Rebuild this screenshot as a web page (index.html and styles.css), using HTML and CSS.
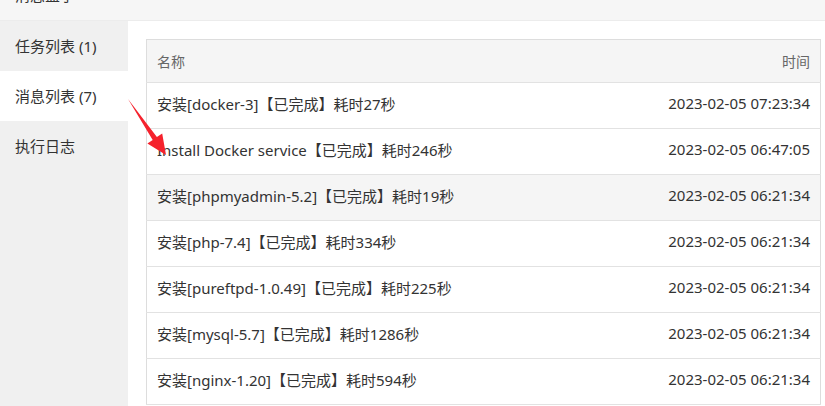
FILE: index.html
```html
<!DOCTYPE html>
<html lang="zh-CN">
<head>
    <meta charset="UTF-8">
    <title>消息盒子</title>
    <link rel="stylesheet" href="styles.css">
</head>
<body>

<div class="box">
    <div class="box-title"><span>消息盒子</span></div>
    <div class="box-body">
        <ul class="tabs">
            <li class="tab">任务列表 (1)</li>
            <li class="tab active">消息列表 (7)</li>
            <li class="tab">执行日志</li>
        </ul>
        <div class="panel">
            <table class="msg-table">
                <thead>
                    <tr>
                        <th>名称</th>
                        <th class="time">时间</th>
                    </tr>
                </thead>
                <tbody>
                    <tr><td>安装[docker-3]【已完成】耗时27秒</td><td class="time">2023-02-05 07:23:34</td></tr>
                    <tr><td>Install Docker service【已完成】耗时246秒</td><td class="time">2023-02-05 06:47:05</td></tr>
                    <tr class="hover"><td>安装[phpmyadmin-5.2]【已完成】耗时19秒</td><td class="time">2023-02-05 06:21:34</td></tr>
                    <tr><td>安装[php-7.4]【已完成】耗时334秒</td><td class="time">2023-02-05 06:21:34</td></tr>
                    <tr><td>安装[pureftpd-1.0.49]【已完成】耗时225秒</td><td class="time">2023-02-05 06:21:34</td></tr>
                    <tr><td>安装[mysql-5.7]【已完成】耗时1286秒</td><td class="time">2023-02-05 06:21:34</td></tr>
                    <tr><td>安装[nginx-1.20]【已完成】耗时594秒</td><td class="time">2023-02-05 06:21:34</td></tr>
                </tbody>
            </table>
        </div>
    </div>
</div>

<!-- 标注箭头 -->
<svg class="mark-arrow" width="825" height="406" viewBox="0 0 825 406">
    <polygon points="128,99 156.9,137.1 162.2,133.5 166,155 147.4,143.5 152.7,139.9" fill="#f5222d"/>
</svg>

</body>
</html>
```

FILE: styles.css
```css
/* 全局样式 */
* {
    margin: 0;
    padding: 0;
    box-sizing: border-box;
}

html, body {
    width: 825px;
    height: 406px;
    overflow: hidden;
    background: #fff;
    font-family: "Noto Sans", "Noto Sans CJK SC", sans-serif;
    color: #333;
}

/* 顶部标题 */
.box-title {
    height: 21px;
    overflow: hidden;
    background: #f6f6f6;
    border-bottom: 1px solid #ececec;
    padding-left: 15px;
}

.box-title span {
    display: block;
    margin-top: -15px;
    line-height: 20px;
    font-size: 15px;
    color: #333;
}

.box-body {
    display: flex;
}

/* 左侧标签 */
.tabs {
    list-style: none;
    width: 128px;
    flex-shrink: 0;
    background: #f0f0f0;
    height: 385px;
}

.tab {
    height: 50px;
    line-height: 50px;
    padding-left: 15px;
    font-size: 15px;
    color: #333;
}

.tab.active {
    background: #fff;
}

/* 表格 */
.panel {
    flex: 1;
    padding: 18px 4px 0 18px;
}

.msg-table {
    width: 100%;
    border-collapse: collapse;
    font-size: 15px;
    border: 1px solid #ddd;
}

.msg-table th {
    height: 43px;
    background: #f5f5f5;
    color: #666;
    font-size: 14px;
    font-weight: normal;
    text-align: left;
    padding: 0 10px 1px;
    border-bottom: 1px solid #e2e2e2;
}

.msg-table td {
    height: 46px;
    padding: 0 10px 5px;
    border-bottom: 1px solid #e2e2e2;
    color: #333;
}

.msg-table .time {
    text-align: right;
}

.msg-table tr.hover td {
    background: #f5f5f5;
}

/* 标注 */
.mark-arrow {
    position: absolute;
    left: 0;
    top: 0;
    pointer-events: none;
}
```
